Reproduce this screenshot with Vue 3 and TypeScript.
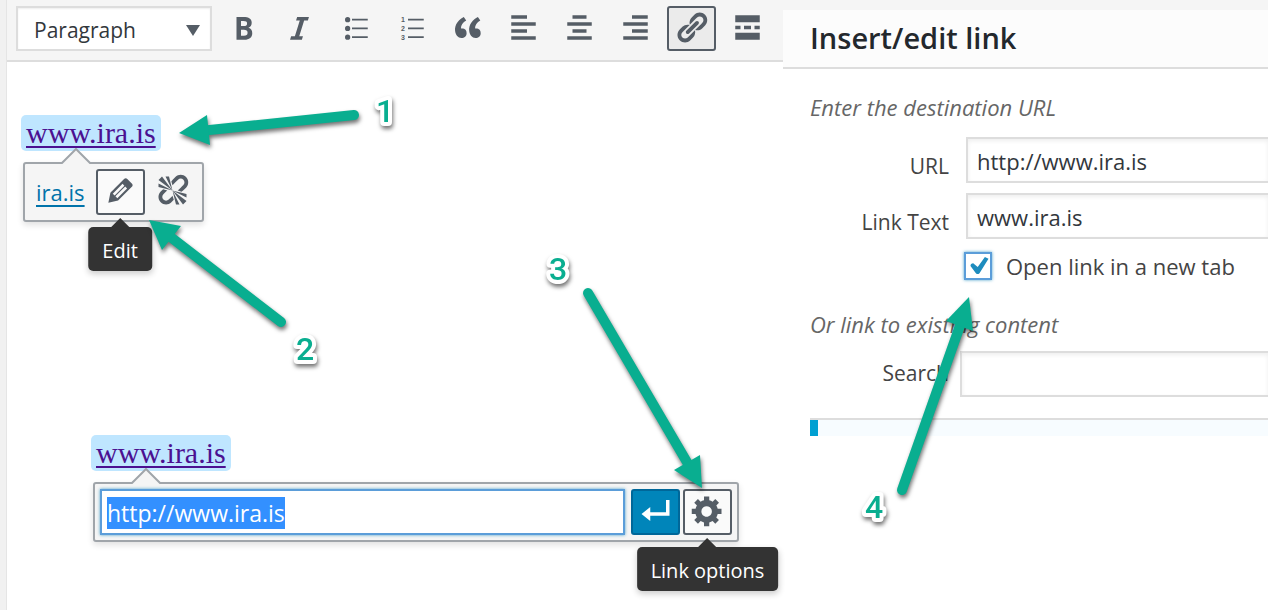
<script setup lang="ts">
import { onMounted, ref } from 'vue'

interface Tool {
  name: string
  path: string
  active?: boolean
  numbers?: boolean
}

interface Arrow {
  label: string
  x: number
  y: number
  shaft: string
  head: string
}

const tools: Tool[] = [
  { name: 'Bold', path: 'M6 4v13h4.54c1.37 0 2.46-.33 3.26-1 .8-.66 1.2-1.58 1.2-2.77 0-.84-.17-1.51-.51-2.01s-.9-.85-1.67-1.03v-.09c.57-.1 1.02-.4 1.36-.9s.51-1.13.51-1.91c0-1.14-.39-1.98-1.17-2.5C12.75 4.26 11.5 4 9.78 4H6zm2.57 5.15V6.26h1.36c.73 0 1.27.11 1.61.32.34.22.51.58.51 1.07 0 .54-.16.92-.47 1.15s-.82.35-1.51.35h-1.5zm0 2.19h1.6c1.44 0 2.16.53 2.16 1.61 0 .6-.17 1.05-.51 1.34s-.86.43-1.57.43H8.57v-3.38z' },
  { name: 'Italic', path: 'M14.78 6h-2.13l-2.8 9h2.12l-.62 2H4.6l.62-2h2.14l2.8-9H8.03l.62-2h6.75z' },
  { name: 'Bulleted list', path: 'M5.5 7a1.5 1.5 0 1 1 0-3 1.5 1.5 0 0 1 0 3zM8 5h9v1H8zM5.5 12a1.5 1.5 0 1 1 0-3 1.5 1.5 0 0 1 0 3zM8 10h9v1H8zM5.5 17a1.5 1.5 0 1 1 0-3 1.5 1.5 0 0 1 0 3zM8 15h9v1H8z' },
  { name: 'Numbered list', path: 'M8 5h9v1H8zM8 10h9v1H8zM8 15h9v1H8z', numbers: true },
  { name: 'Blockquote', path: 'M9.49 13.22c0-.74-.2-1.38-.61-1.9-.62-.78-1.83-.88-2.53-.72-.29-1.65 1.11-3.75 2.92-4.65L7.88 4c-2.73 1.3-5.42 4.28-4.96 8.05C3.21 14.43 4.59 16 6.54 16c.85 0 1.56-.25 2.12-.75s.83-1.18.83-2.03zm8.05 0c0-.74-.2-1.38-.61-1.9-.63-.78-1.83-.88-2.53-.72-.29-1.65 1.11-3.75 2.92-4.65L15.93 4c-2.73 1.3-5.41 4.28-4.95 8.05.28 2.38 1.66 3.95 3.61 3.95.85 0 1.56-.25 2.12-.75s.83-1.18.83-2.03z' },
  { name: 'Align left', path: 'M12 5V3H3v2h9zm5 4V7H3v2h14zm-5 4v-2H3v2h9zm5 4v-2H3v2h14z' },
  { name: 'Align center', path: 'M14 5V3H6v2h8zm3 4V7H3v2h14zm-3 4v-2H6v2h8zm3 4v-2H3v2h14z' },
  { name: 'Align right', path: 'M17 5V3H8v2h9zm0 4V7H3v2h14zm0 4v-2H8v2h9zm0 4v-2H3v2h14z' },
  { name: 'Insert/edit link', active: true, path: 'M17.74 2.76c1.68 1.69 1.68 4.41 0 6.1l-1.53 1.52c-1.12 1.12-2.7 1.47-4.14 1.09l2.62-2.61.76-.77.76-.76c.84-.84.84-2.2 0-3.04-.84-.85-2.2-.85-3.04 0l-.77.76-3.38 3.38c-.37-1.44-.02-3.02 1.1-4.14l1.52-1.53c1.69-1.68 4.42-1.68 6.1 0zM8.59 13.43l5.34-5.34c.42-.42.42-1.1 0-1.52-.44-.43-1.13-.39-1.53 0l-5.33 5.34c-.42.42-.42 1.1 0 1.52.44.43 1.13.39 1.52 0zm-.76 2.29l4.14-4.15c.38 1.44.03 3.02-1.09 4.14l-1.52 1.53c-1.69 1.68-4.41 1.68-6.1 0-1.68-1.68-1.68-4.42 0-6.1l1.53-1.52c1.12-1.12 2.7-1.47 4.14-1.1l-4.14 4.15c-.85.84-.85 2.2 0 3.05.84.84 2.2.84 3.04 0z' },
  { name: 'Read more', path: 'M17 7V3H3v4h14zM6 11V9H3v2h3zm6 0V9H8v2h4zm5 0V9h-3v2h3zm0 6v-4H3v4h14z' },
]

const arrows: Arrow[] = [
  { label: '1', x: 385, y: 122, shaft: 'M354 115L200 131', head: '179,133 207,115 210,145' },
  { label: '2', x: 305, y: 360, shaft: 'M281 322L168 235', head: '149,220 181,226 162,250' },
  { label: '3', x: 558, y: 280, shaft: 'M588 293L691 469', head: '702,488 700,455 674,470' },
  { label: '4', x: 874, y: 518, shaft: 'M902 490L962 320', head: '969,297 946,321 973,331' },
]

const linkUrl = ref('http://www.ira.is')
const dialogUrl = ref('http://www.ira.is')
const linkText = ref('www.ira.is')
const newTab = ref(true)
const search = ref('')
const urlField = ref<HTMLInputElement | null>(null)

onMounted(() => {
  urlField.value?.focus()
  urlField.value?.select()
})
</script>

<template>
  <div class="page">
    <main class="editor">
      <div class="toolbar">
        <div class="format">
          <select aria-label="Format">
            <option>Paragraph</option>
          </select>
          <svg class="caret" viewBox="0 0 14 11" aria-hidden="true"><path d="M0 0h14L7 11z" /></svg>
        </div>
        <button v-for="tool in tools" :key="tool.name" type="button" class="tool" :class="{ active: tool.active }" :aria-label="tool.name">
          <svg class="icon" viewBox="0 0 20 20" aria-hidden="true">
            <path :d="tool.path" />
            <g v-if="tool.numbers" class="numbers">
              <text x="4" y="7">1</text>
              <text x="4" y="12">2</text>
              <text x="4" y="17">3</text>
            </g>
          </svg>
        </button>
      </div>

      <section class="sample">
        <a class="selected-link" href="#">www.ira.is</a>
        <div class="popover">
          <svg class="notch" viewBox="0 0 30 16" aria-hidden="true"><path d="M0 16L15 1l15 15" /></svg>
          <a class="preview" href="#">ira.is</a>
          <button type="button" class="pop-button outlined" aria-label="Edit">
            <svg class="icon" viewBox="0 0 20 20" aria-hidden="true"><path d="M13.89 3.39l2.71 2.72c.46.46.42 1.24.03 1.64l-8.01 8.02-5.56 1.16 1.16-5.58s7.6-7.63 7.99-8.03c.39-.39 1.22-.39 1.68.07zm-2.73 2.79l-5.59 5.61 1.11 1.11 5.54-5.65zm-2.97 8.23l5.58-5.6-1.07-1.08-5.59 5.6z" /></svg>
            <span class="tooltip">Edit</span>
          </button>
          <button type="button" class="pop-button" aria-label="Remove link">
            <svg class="icon" viewBox="0 0 20 20" aria-hidden="true"><path d="M17.74 2.26c1.68 1.69 1.68 4.41 0 6.1l-1.53 1.52c-.32.33-.69.58-1.08.77L13 10l1.69-1.64.76-.77.76-.76c.84-.84.84-2.2 0-3.04-.84-.85-2.2-.85-3.04 0l-.77.76-.76.76L10 7l-.65-2.14c.19-.38.44-.75.77-1.07l1.52-1.53c1.69-1.68 4.42-1.68 6.1 0zM2 4l8 6-6-8zm4-2l4 8-2-8H6zM2 6l8 4-8-2V6zm7.36 7.69L10 13l.74 2.35-1.38 1.39c-1.69 1.68-4.41 1.68-6.1 0-1.68-1.68-1.68-4.42 0-6.1l1.39-1.38L7 10l-.69.64-1.52 1.53c-.85.84-.85 2.2 0 3.04.84.85 2.2.85 3.04 0zM18 16l-8-6 6 8zm-4 2l-4-8 2 8h2zm4-4l-8-4 8 2v2z" /></svg>
          </button>
        </div>
      </section>

      <section class="sample editing">
        <a class="selected-link" href="#">www.ira.is</a>
        <div class="popover wide">
          <svg class="notch" viewBox="0 0 30 16" aria-hidden="true"><path d="M0 16L15 1l15 15" /></svg>
          <input ref="urlField" v-model="linkUrl" class="inline-url" type="text" aria-label="Link address" spellcheck="false" />
          <button type="button" class="pop-button apply" aria-label="Apply">
            <svg class="icon" viewBox="0 0 20 20" aria-hidden="true"><path d="M16 4h2v9H7v3l-5-4 5-4v3h9V4z" /></svg>
          </button>
          <button type="button" class="pop-button outlined" aria-label="Link options">
            <svg class="icon" viewBox="0 0 20 20" aria-hidden="true"><path d="M18 12h-2.18c-.17.7-.44 1.35-.81 1.93l1.54 1.54-2.1 2.1-1.54-1.54c-.58.36-1.23.63-1.91.79V19H8v-2.18c-.68-.16-1.33-.43-1.91-.79l-1.54 1.54-2.12-2.12 1.54-1.54c-.36-.58-.63-1.23-.79-1.91H1V9.03h2.17c.16-.7.44-1.35.8-1.94L2.43 5.55l2.1-2.1 1.54 1.54c.58-.37 1.24-.64 1.93-.81V2h3v2.18c.68.16 1.33.43 1.91.79l1.54-1.54 2.12 2.12-1.54 1.54c.36.59.64 1.24.8 1.94H18V12zm-8.5 1.5c1.66 0 3-1.34 3-3s-1.34-3-3-3-3 1.34-3 3 1.34 3 3 3z" /></svg>
            <span class="tooltip">Link options</span>
          </button>
        </div>
      </section>
    </main>

    <aside class="dialog">
      <h1>Insert/edit link</h1>
      <form class="fields" @submit.prevent>
        <p class="hint">Enter the destination URL</p>
        <div class="row">
          <label for="url">URL</label>
          <input id="url" v-model="dialogUrl" type="text" spellcheck="false" />
        </div>
        <div class="row">
          <label for="text">Link Text</label>
          <input id="text" v-model="linkText" type="text" spellcheck="false" />
        </div>
        <div class="check-row">
          <span class="box">
            <input id="tab" v-model="newTab" type="checkbox" />
            <svg v-if="newTab" viewBox="0 0 20 20" aria-hidden="true"><path d="M16 0l4 2-10 16q-2 2-4 0L0 10q0-3 3-3l5 4z" /></svg>
          </span>
          <label for="tab">Open link in a new tab</label>
        </div>
        <p class="hint second">Or link to existing content</p>
        <div class="row search">
          <label for="search">Search</label>
          <input id="search" v-model="search" type="text" />
        </div>
        <div class="results"></div>
      </form>
    </aside>

    <svg class="annotations" width="1268" height="610" viewBox="0 0 1268 610">
      <g v-for="arrow in arrows" :key="arrow.label" class="annotation">
        <path :d="arrow.shaft" />
        <polygon :points="arrow.head" />
        <text :x="arrow.x" :y="arrow.y">{{ arrow.label }}</text>
      </g>
    </svg>
  </div>
</template>

<style>
body {
  margin: 0;
  background: #fff;
}
</style>

<style scoped>
* {
  box-sizing: border-box;
}

.page {
  position: relative;
  display: grid;
  grid-template-columns: minmax(0, 783fr) minmax(0, 485fr);
  min-height: 100vh;
  overflow: hidden;
  background: #fff;
  color: #444;
  font-family: "Open Sans", "Noto Sans", sans-serif;
  font-size: 21px;
}

button,
input,
select {
  margin: 0;
  font: inherit;
}

.icon {
  display: block;
  flex: none;
  width: 35px;
  height: 35px;
  fill: #555d66;
}

.numbers {
  font-family: "Liberation Sans", Arial, sans-serif;
  font-size: 4px;
  font-weight: 700;
}

.editor {
  border-left: 6px solid #f1f1f1;
  box-shadow: inset 1px 0 #e5e5e5;
  padding-left: 1px;
}

.toolbar {
  display: flex;
  gap: 7px;
  height: 62px;
  padding: 6px 0 0 9px;
  border-bottom: 2px solid #ddd;
  background: #f5f5f5;
}

.format {
  position: relative;
  width: 196px;
  height: 45px;
}

.format select {
  width: 100%;
  height: 100%;
  padding: 2px 16px 0;
  border: 2px solid #ddd;
  border-radius: 0;
  background: #fff;
  box-shadow: inset 0 1px 2px rgba(0, 0, 0, 0.07);
  color: #32373c;
  appearance: none;
}

.caret {
  position: absolute;
  top: 19px;
  right: 12px;
  width: 14px;
  height: 11px;
  fill: #555d66;
  pointer-events: none;
}

.tool,
.pop-button {
  display: flex;
  flex: none;
  align-items: center;
  justify-content: center;
  width: 49px;
  height: 45px;
  padding: 0 0 2px;
  border: 2px solid transparent;
  border-radius: 3px;
  background: none;
}

.tool.active {
  border-color: #555d66;
  background: #ebebeb;
}

.sample {
  display: flex;
  flex-direction: column;
  align-items: flex-start;
  gap: 11px;
  padding: 53px 0 0 14px;
}

.sample.editing {
  padding: 213px 0 0 84px;
}

.selected-link {
  padding: 0 5px;
  border-radius: 5px;
  background: #bfe6ff;
  color: #4b1191;
  font-family: "Liberation Serif", serif;
  font-size: 30px;
  line-height: 36px;
  text-decoration-thickness: 2px;
  text-underline-offset: 3px;
}

.popover {
  position: relative;
  display: flex;
  align-items: center;
  gap: 3px;
  height: 60px;
  margin-left: 2px;
  padding: 0 5px 0 11px;
  border: 2px solid #a0a5aa;
  border-radius: 3px;
  background: #f5f5f5;
  box-shadow: 0 3px 6px rgba(0, 0, 0, 0.12);
}

.popover.wide {
  width: 646px;
  padding-left: 5px;
}

.notch {
  position: absolute;
  top: -16px;
  left: 36px;
  width: 30px;
  height: 16px;
  fill: #f5f5f5;
  stroke: #a0a5aa;
  stroke-width: 2px;
}

.preview {
  margin-right: 8px;
  color: #0073aa;
  font-size: 22px;
  text-decoration-thickness: 2px;
  text-underline-offset: 4px;
}

.pop-button {
  position: relative;
  height: 46px;
  padding-bottom: 4px;
}

.outlined {
  border-color: #555d66;
  background: #fafafa;
}

.apply {
  margin-left: 3px;
  border-color: #006799;
  background: #0085ba;
}

.apply .icon {
  fill: #fff;
}

.inline-url {
  flex: 1;
  min-width: 0;
  height: 46px;
  padding: 2px 5px 0;
  border: 2px solid #5b9dd9;
  outline: none;
  background: #fff;
  box-shadow: 0 0 3px rgba(30, 140, 190, 0.8);
  color: #32373c;
  font-size: 23px;
}

.inline-url::selection {
  background: #3390ff;
  color: #fff;
}

.tooltip {
  position: absolute;
  top: 56px;
  left: 50%;
  height: 44px;
  padding: 2px 14px 0;
  border-radius: 5px;
  background: #333;
  box-shadow: 0 3px 6px rgba(0, 0, 0, 0.2);
  color: #fff;
  font-size: 20px;
  line-height: 44px;
  white-space: nowrap;
  transform: translateX(-50%);
}

.tooltip::before {
  content: "";
  position: absolute;
  bottom: 100%;
  left: 50%;
  margin-left: -9px;
  border: 9px solid transparent;
  border-top: 0;
  border-bottom-color: #333;
}

.dialog {
  border-top: 10px solid #f5f5f5;
  background: #fff;
}

h1 {
  height: 59px;
  margin: 0;
  padding-left: 27px;
  border-bottom: 2px solid #ddd;
  background: #fcfcfc;
  color: #23282d;
  font-size: 29px;
  font-weight: 600;
  line-height: 56px;
}

.fields {
  display: flex;
  flex-direction: column;
  gap: 10px;
  padding: 23px 0 0 27px;
}

.hint {
  margin: 0 0 5px;
  color: #666;
  font-size: 22px;
  font-style: italic;
  line-height: 30px;
}

.row {
  display: flex;
  gap: 17px;
}

.row label {
  flex: none;
  width: 139px;
  padding-top: 12px;
  line-height: 34px;
  text-align: right;
}

.row input {
  flex: 1;
  min-width: 0;
  height: 46px;
  padding: 2px 9px 0;
  border: 2px solid #ddd;
  border-right: 0;
  background: #fff;
  box-shadow: inset 0 2px 4px rgba(0, 0, 0, 0.07);
  color: #32373c;
  font-size: 22px;
}

.check-row {
  display: flex;
  align-items: center;
  gap: 14px;
  padding: 2px 0 0 154px;
}

.check-row label {
  font-size: 22px;
  line-height: 30px;
}

.box {
  position: relative;
  width: 28px;
  height: 28px;
}

.box input {
  display: block;
  width: 28px;
  height: 28px;
  border: 2px solid #5b9dd9;
  background: #fff;
  box-shadow: 0 0 3px rgba(30, 140, 190, 0.8);
  appearance: none;
}

.box svg {
  position: absolute;
  top: 5px;
  left: 6px;
  width: 19px;
  height: 18px;
  fill: #1e8cbe;
  pointer-events: none;
}

.second {
  margin: 18px 0 2px;
}

.search {
  gap: 11px;
}

.search label {
  padding-top: 5px;
}

.results {
  height: 18px;
  margin-top: 11px;
  border-top: 2px solid #ddd;
  background: linear-gradient(to right, #00a0d2 8px, #f7fcff 8px);
}

.annotations {
  position: absolute;
  top: 0;
  left: 0;
  pointer-events: none;
}

.annotation {
  fill: #09ae90;
  filter: drop-shadow(1px 3px 2px rgba(0, 0, 0, 0.55));
}

.annotation path {
  stroke: #09ae90;
  stroke-width: 10px;
  stroke-linecap: round;
}

.annotation text {
  font-family: Roboto, "Open Sans", sans-serif;
  font-size: 32px;
  font-weight: 500;
  text-anchor: middle;
  stroke: #fff;
  stroke-width: 8px;
  stroke-linejoin: round;
  paint-order: stroke;
}
</style>
